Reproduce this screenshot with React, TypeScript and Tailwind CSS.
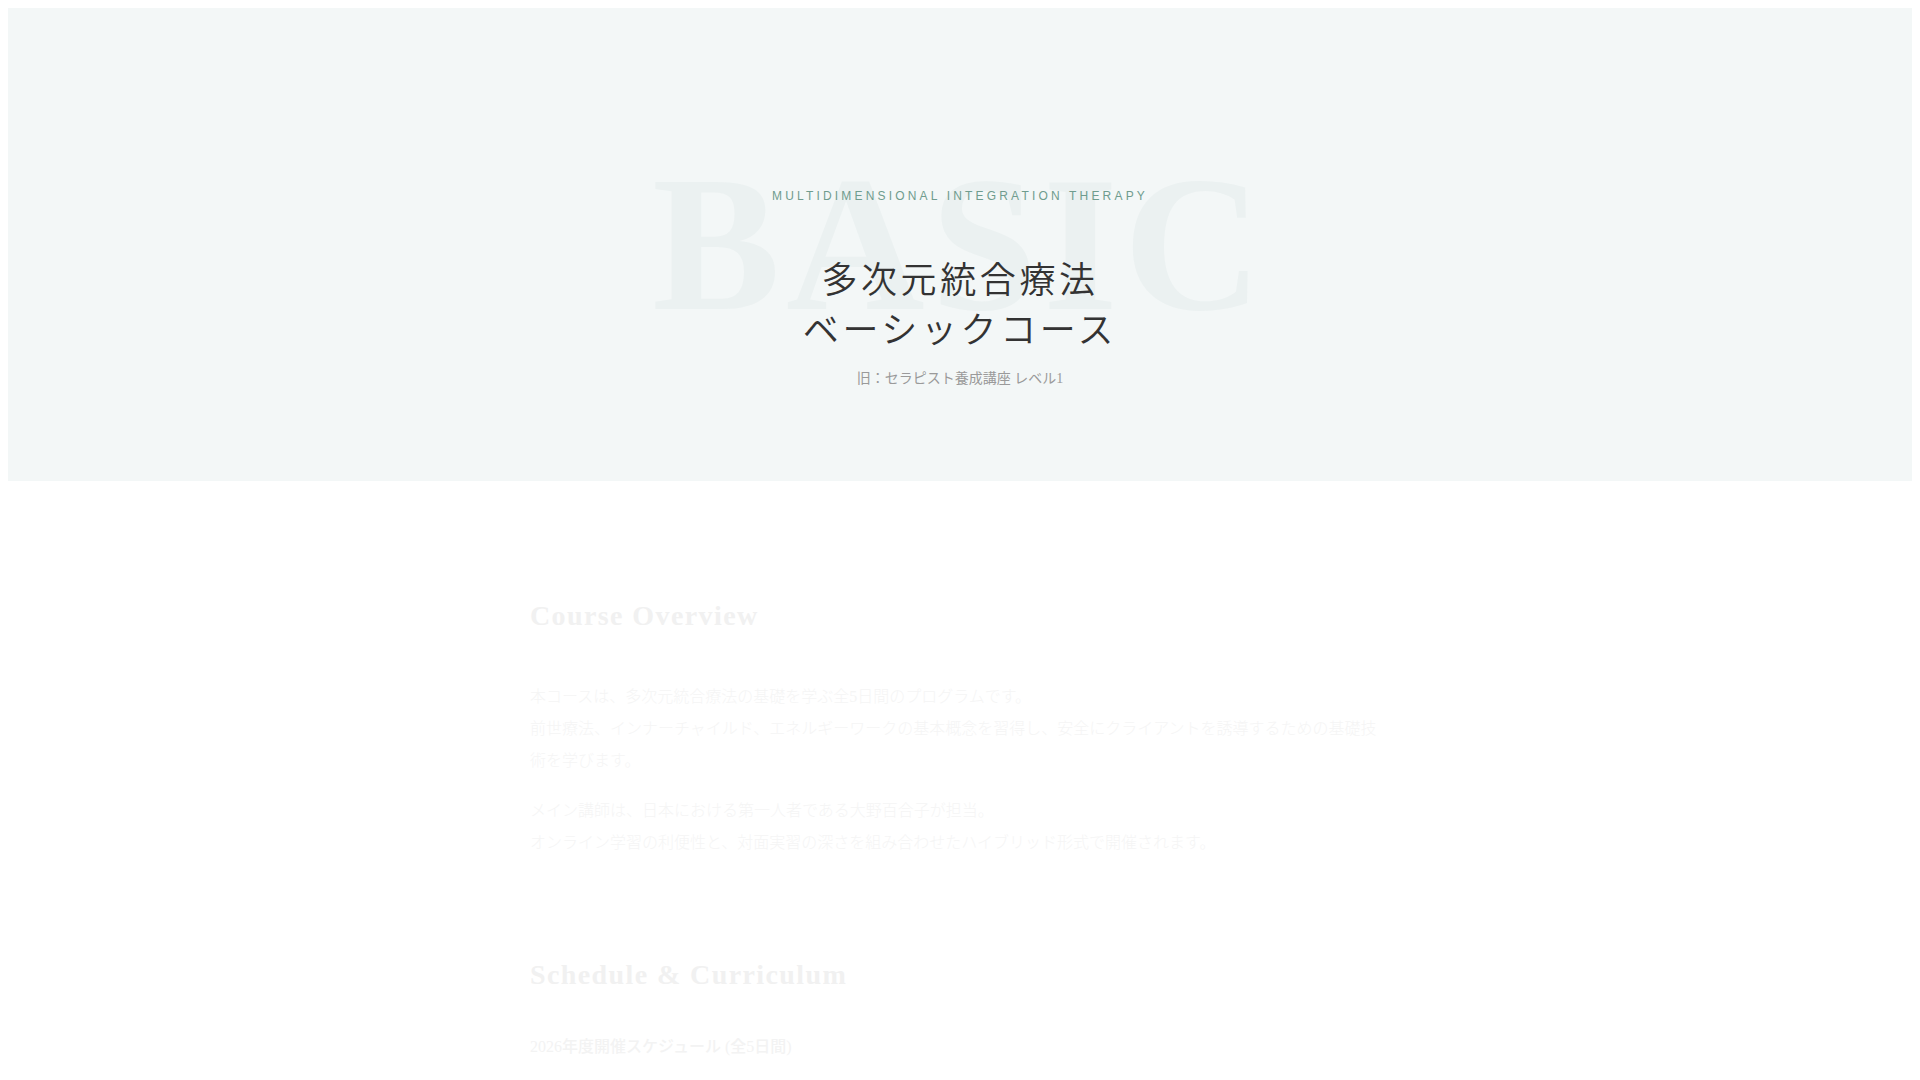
import React from "react";

const serif = "font-['Liberation_Serif','Noto_Sans_CJK_JP',serif]";

export default function App() {
  return (
    <div className="min-h-screen bg-white font-['Liberation_Serif','Noto_Sans_CJK_JP',serif]">
      <div className="p-2 pb-0">
        <section className="relative h-[473px] overflow-hidden bg-[#f3f7f7] flex flex-col items-center pt-[180px]">
          <span
            aria-hidden="true"
            className="pointer-events-none absolute left-1/2 top-1/2 -translate-x-1/2 -translate-y-1/2 select-none whitespace-nowrap font-['Liberation_Serif',serif] text-[192px] font-bold leading-none tracking-[0.03em] text-[#ebf1f1]"
          >
            BASIC
          </span>
          <p className="relative font-['Liberation_Sans',Arial,sans-serif] text-[12px] leading-4 tracking-[0.265em] text-[#6f9c8e]">
            MULTIDIMENSIONAL INTEGRATION THERAPY
          </p>
          <h1 className="relative mt-[48px] text-center font-['Noto_Sans_CJK_JP',sans-serif] text-[36px] font-[350] leading-[1.4] tracking-[0.1em] text-[#333333]">
            多次元統合療法
            <br />
            ベーシックコース
          </h1>
          <p className={`relative mt-4 ${serif} text-[14px] font-normal leading-5 text-[#9a9a9a]`}>
            旧：セラピスト養成講座 レベル1
          </p>
        </section>
      </div>

      <main className="mx-auto max-w-[860px] pt-[118px]">
        <section>
          <h2 className="text-[28px] font-bold leading-[1.2] tracking-[0.05em] text-[#f1f1f1]">
            Course Overview
          </h2>
          <div className="mt-12 text-[16px] font-light leading-8 text-[#f5f5f5]">
            <p>
              本コースは、多次元統合療法の基礎を学ぶ全5日間のプログラムです。
              <br />
              前世療法、インナーチャイルド、エネルギーワークの基本概念を習得し、安全にクライアントを誘導するための基礎技術を学びます。
            </p>
            <p className="mt-[18px]">
              メイン講師は、日本における第一人者である大野百合子が担当。
              <br />
              オンライン学習の利便性と、対面実習の深さを組み合わせたハイブリッド形式で開催されます。
            </p>
          </div>
        </section>

        <section className="mt-[99px]">
          <h2 className="text-[28px] font-bold leading-[1.2] tracking-[0.05em] text-[#f1f1f1]">
            Schedule &amp; Curriculum
          </h2>
          <h3 className="mt-10 text-[16px] font-medium leading-8 text-[#f3f3f3]">
            2026年度開催スケジュール (全5日間)
          </h3>
        </section>
      </main>
    </div>
  );
}
